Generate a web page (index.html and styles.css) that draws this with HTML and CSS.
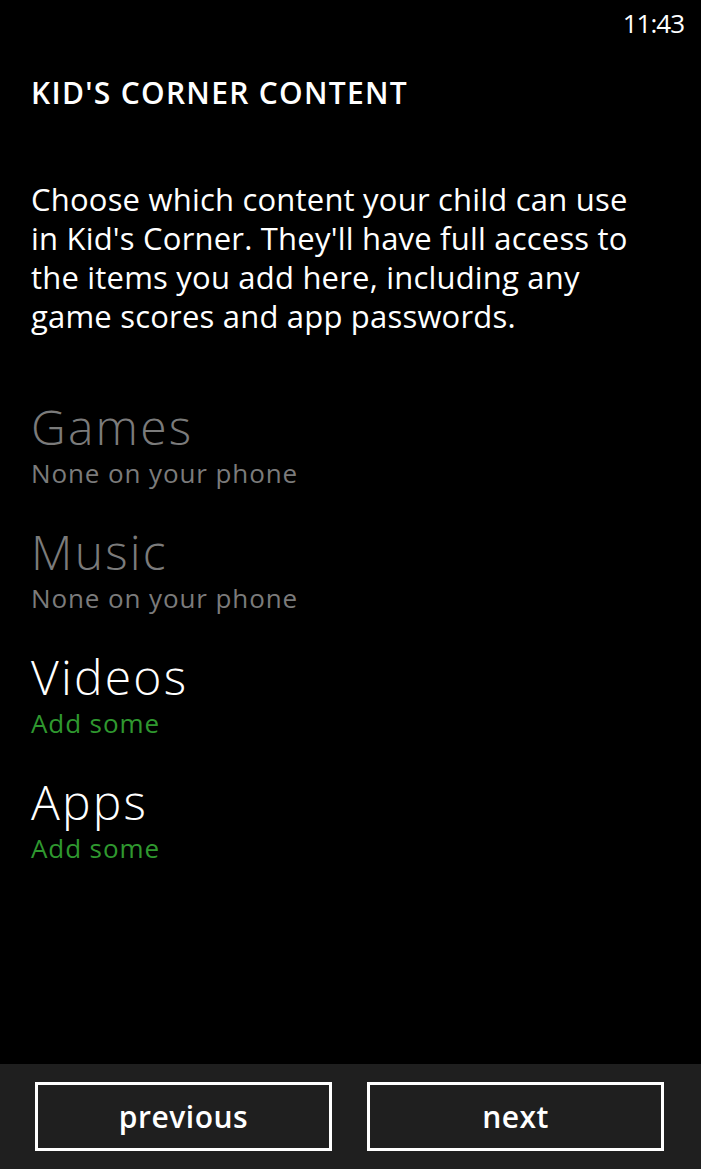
FILE: index.html
```html
<!DOCTYPE html>
<html lang="en">
<head>
<meta charset="utf-8">
<title>Kid's Corner content</title>
<link rel="stylesheet" href="styles.css">
</head>
<body>
<div class="page">
  <div class="status-bar"><span class="time">11:43</span></div>
  <main class="content">
    <h1 class="title">KID'S CORNER CONTENT</h1>
    <p class="intro">Choose which content your child can use in Kid's Corner. They'll have full access to the items you add here, including any game scores and app passwords.</p>
    <ul class="items">
      <li class="item disabled">
        <div class="item-name">Games</div>
        <div class="item-sub">None on your phone</div>
      </li>
      <li class="item disabled">
        <div class="item-name">Music</div>
        <div class="item-sub">None on your phone</div>
      </li>
      <li class="item">
        <div class="item-name">Videos</div>
        <div class="item-sub accent">Add some</div>
      </li>
      <li class="item">
        <div class="item-name">Apps</div>
        <div class="item-sub accent">Add some</div>
      </li>
    </ul>
  </main>
  <footer class="app-bar">
    <button class="btn">previous</button>
    <button class="btn">next</button>
  </footer>
</div>
</body>
</html>
```

FILE: styles.css
```css
* { box-sizing: border-box; }
html, body { margin: 0; padding: 0; background: #000; }
body {
  font-family: "Open Sans", "Noto Sans", "DejaVu Sans", sans-serif;
  color: #fff;
}
.page {
  width: 701px;
  min-height: 1169px;
  display: flex;
  flex-direction: column;
}
.status-bar {
  display: flex;
  justify-content: flex-end;
  padding: 9px 17px 0 0;
  height: 45px;
}
.time {
  font-size: 26px;
  line-height: 28px;
  font-weight: 400;
  letter-spacing: -1px;
}
.content {
  padding: 0 50px 0 31px;
}
.title {
  margin: 30px 0 0 0;
  font-size: 30px;
  line-height: 36px;
  font-weight: 600;
  letter-spacing: 1.3px;
}
.intro {
  margin: 69px 0 0 0;
  font-size: 31px;
  line-height: 39px;
  font-weight: 400;
  letter-spacing: 0.2px;
}
.items {
  list-style: none;
  margin: 65px 0 0 0;
  padding: 0;
  display: flex;
  flex-direction: column;
  gap: 38px;
}
.item { display: flex; flex-direction: column; gap: 5px; }
.item-name {
  font-size: 48px;
  line-height: 52px;
  font-weight: 300;
  letter-spacing: 2.2px;
  color: #fff;
}
.item-sub {
  font-size: 26px;
  line-height: 30px;
  font-weight: 400;
  letter-spacing: 0.9px;
  color: #fff;
}
.item.disabled .item-name,
.item.disabled .item-sub { color: #7b7b7b; }
.item-sub.accent { color: #2f982f; }
.app-bar {
  margin-top: auto;
  height: 105px;
  background: #1f1f1f;
  padding: 18px 37px 18px 35px;
  display: grid;
  grid-template-columns: 1fr 1fr;
  gap: 35px;
}
.btn {
  background: transparent;
  border: 3px solid #fff;
  color: #fff;
  font-family: inherit;
  font-size: 30px;
  font-weight: 600;
  letter-spacing: 0.5px;
  padding: 0;
  height: 69px;
}
```
